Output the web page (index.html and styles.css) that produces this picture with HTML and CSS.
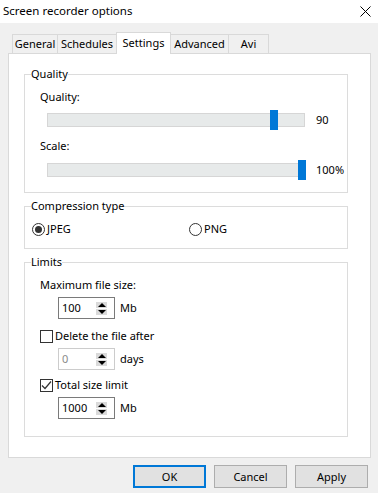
FILE: index.html
```html
<!DOCTYPE html>
<html lang="en">
<head>
    <meta charset="UTF-8">
    <title>Screen recorder options</title>
    <link rel="stylesheet" href="styles.css">
</head>
<body>
    <div class="titlebar">
        <span class="title">Screen recorder options</span>
        <svg class="close" width="11" height="11" viewBox="0 0 11 11">
            <path d="M0.5 0.5 L10.5 10.5 M10.5 0.5 L0.5 10.5" stroke="#000" stroke-width="1" fill="none"/>
        </svg>
    </div>

    <div class="dialog">
        <div class="tabs">
            <div class="tab tab-general">General</div>
            <div class="tab tab-schedules">Schedules</div>
            <div class="tab tab-settings active">Settings</div>
            <div class="tab tab-advanced">Advanced</div>
            <div class="tab tab-avi">Avi</div>
        </div>

        <div class="panel">
            <fieldset class="group">
                <legend>Quality</legend>
                <div class="group-body quality">
                    <div class="label">Quality:</div>
                    <div class="slider-row">
                        <div class="track"><span class="thumb" style="left: 222px"></span></div>
                        <span class="value">90</span>
                    </div>
                    <div class="label label-gap">Scale:</div>
                    <div class="slider-row slider-row-2">
                        <div class="track"><span class="thumb" style="left: 250px"></span></div>
                        <span class="value">100%</span>
                    </div>
                </div>
            </fieldset>

            <fieldset class="group group-next">
                <legend>Compression type</legend>
                <div class="group-body compression">
                    <label class="radio"><span class="circle checked"></span>JPEG</label>
                    <label class="radio"><span class="circle"></span>PNG</label>
                </div>
            </fieldset>

            <fieldset class="group group-next">
                <legend>Limits</legend>
                <div class="group-body limits">
                    <div class="label">Maximum file size:</div>
                    <div class="spin-row">
                        <div class="spinner">
                            <span class="spin-text">100</span>
                            <span class="spin-buttons"><span class="up"></span><span class="down"></span></span>
                        </div>
                        <span class="unit">Mb</span>
                    </div>
                    <label class="check"><span class="box"></span>Delete the file after</label>
                    <div class="spin-row">
                        <div class="spinner disabled">
                            <span class="spin-text">0</span>
                            <span class="spin-buttons"><span class="up"></span><span class="down"></span></span>
                        </div>
                        <span class="unit">days</span>
                    </div>
                    <label class="check check-2">
                        <span class="box">
                            <svg width="11" height="11" viewBox="0 0 11 11"><path d="M1 5.5 L4 8.5 L10 1.5" stroke="#333" stroke-width="1.2" fill="none"/></svg>
                        </span>Total size limit
                    </label>
                    <div class="spin-row">
                        <div class="spinner">
                            <span class="spin-text">1000</span>
                            <span class="spin-buttons"><span class="up"></span><span class="down"></span></span>
                        </div>
                        <span class="unit">Mb</span>
                    </div>
                </div>
            </fieldset>
        </div>

        <div class="buttons">
            <button class="btn default">OK</button>
            <button class="btn">Cancel</button>
            <button class="btn">Apply</button>
        </div>
    </div>
</body>
</html>
```

FILE: styles.css
```css
* {
    box-sizing: border-box;
}
body {
    margin: 0;
    background-color: #f0f0f0;
    font-family: "Noto Sans", "Open Sans", sans-serif;
    font-size: 11px;
    line-height: 16px;
    color: #000;
}
.titlebar {
    height: 23px;
    background-color: #fff;
    display: flex;
    justify-content: space-between;
    align-items: center;
    padding: 0 7px 1px 3px;
}
.title {
    font-size: 11.5px;
}
.dialog {
    padding: 8px 7px 0 8px;
}
.tabs {
    display: flex;
    align-items: flex-end;
    height: 22px;
    padding-left: 4px;
}
.tab {
    height: 19px;
    padding-top: 1px;
    text-align: center;
    border: 1px solid #d9d9d9;
    border-bottom: none;
    background-color: #f0f0f0;
    margin-left: -1px;
}
.tab:first-child {
    margin-left: 0;
}
.tab-general { width: 46px; }
.tab-schedules { width: 60px; }
.tab-settings { width: 55px; }
.tab-advanced { width: 59px; }
.tab-avi { width: 41px; }
.tab.active {
    height: 22px;
    padding-top: 2px;
    background-color: #fff;
    margin-bottom: -1px;
    position: relative;
    z-index: 1;
}
.panel {
    background-color: #fff;
    border: 1px solid #d9d9d9;
    height: 405px;
    padding-top: 12px;
}
.group {
    margin: 0 22px 0 15px;
    padding: 0;
    min-width: 0;
    border: 1px solid #dcdcdc;
}
.group-next {
    margin-top: 5px;
}
.group legend {
    padding: 0;
    margin-left: 6px;
    line-height: 16px;
}
.quality {
    padding: 7px 0 12px 15px;
}
.label-gap {
    margin-top: 8px;
}
.slider-row {
    display: flex;
    align-items: center;
    height: 20px;
    margin: 5px 0 0 7px;
}
.slider-row-2 {
    margin-top: 6px;
}
.track {
    position: relative;
    width: 258px;
    height: 14px;
    background-color: #e7eaea;
    border: 1px solid #d6d6d6;
}
.thumb {
    position: absolute;
    top: -4px;
    width: 8px;
    height: 20px;
    background-color: #0078d7;
}
.value {
    margin-left: 11px;
}
.compression {
    display: grid;
    grid-template-columns: 157px auto;
    padding: 7px 0 11px 7px;
}
.radio {
    display: flex;
    align-items: center;
}
.circle {
    width: 13px;
    height: 13px;
    border: 1px solid #333;
    border-radius: 50%;
    margin-right: 2px;
    display: flex;
    align-items: center;
    justify-content: center;
}
.circle.checked::after {
    content: "";
    width: 7px;
    height: 7px;
    border-radius: 50%;
    background-color: #333;
}
.limits {
    padding: 7px 0 17px 15px;
}
.spin-row {
    display: flex;
    align-items: center;
    margin: 4px 0 0 18px;
}
.spinner {
    width: 57px;
    height: 22px;
    border: 1px solid #7a7a7a;
    display: flex;
    align-items: center;
    justify-content: space-between;
    padding: 0 7px 0 3px;
}
.spinner.disabled {
    border-color: #cccccc;
}
.spinner.disabled .spin-text {
    color: #8a8a8a;
}
.spin-buttons {
    display: flex;
    flex-direction: column;
    gap: 1px;
}
.spin-buttons span {
    width: 11px;
    height: 6px;
    background-color: #dadada;
    display: flex;
    align-items: center;
    justify-content: center;
}
.spin-buttons .up::after {
    content: "";
    border-left: 4px solid transparent;
    border-right: 4px solid transparent;
    border-bottom: 4px solid #000;
}
.spin-buttons .down::after {
    content: "";
    border-left: 4px solid transparent;
    border-right: 4px solid transparent;
    border-top: 4px solid #000;
}
.unit {
    margin-left: 5px;
}
.check {
    display: flex;
    align-items: center;
    margin-top: 9px;
}
.check-2 {
    margin-top: 7px;
}
.box {
    width: 13px;
    height: 13px;
    border: 1px solid #333;
    margin-right: 2px;
    display: flex;
    align-items: center;
    justify-content: center;
}
.buttons {
    display: flex;
    justify-content: flex-end;
    gap: 8px;
    margin: 7px 3px 0 0;
}
.btn {
    width: 73px;
    height: 23px;
    border: 1px solid #adadad;
    background-color: #e1e1e1;
    font-family: inherit;
    font-size: 11px;
    color: #000;
    padding: 0;
}
.btn.default {
    border: 2px solid #0078d7;
}
```
